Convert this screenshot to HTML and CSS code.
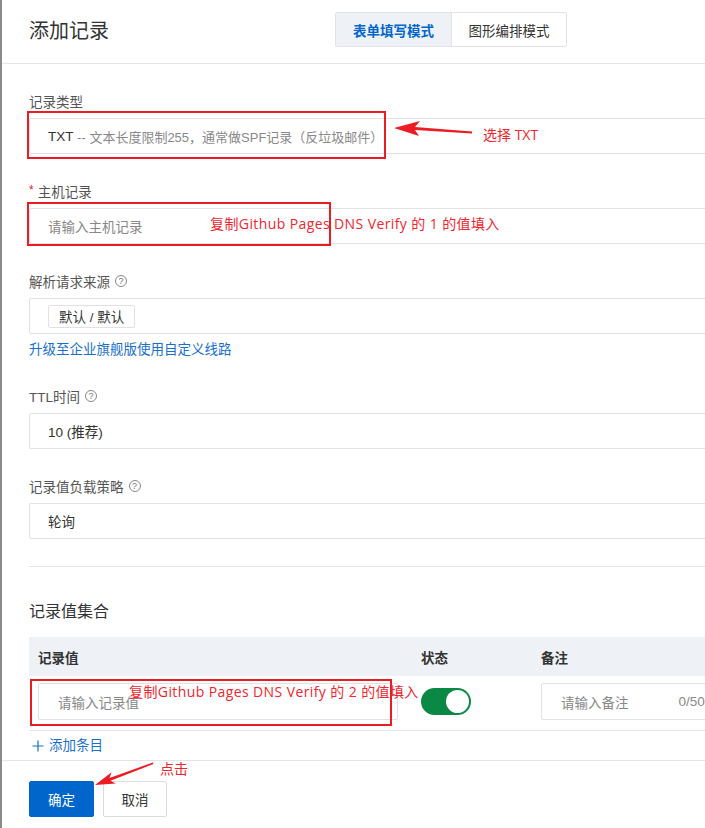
FILE: index.html
```html
<!doctype html>
<html lang="zh-CN">
<head>
	<meta charset="UTF-8">
	<title>添加记录</title>
	<link rel="stylesheet" href="styles.css">
</head>
<body>
	<div class="drawer">
		<div class="drawer-header">
			<h2 class="drawer-title">添加记录</h2>
			<div class="mode-switch">
				<span class="mode-item mode-active">表单填写模式</span>
				<span class="mode-item">图形编排模式</span>
			</div>
		</div>

		<div class="drawer-body">
			<div class="form-item">
				<div class="form-label">记录类型</div>
				<div class="form-input"><span class="val">TXT</span><span class="muted">&nbsp;-- 文本长度限制255，通常做SPF记录（反垃圾邮件）</span></div>
			</div>
			<div class="form-item">
				<div class="form-label"><span class="req">*</span>主机记录</div>
				<div class="form-input"><span class="placeholder">请输入主机记录</span></div>
			</div>
			<div class="form-item">
				<div class="form-label">解析请求来源 <span class="help">?</span></div>
				<div class="form-input"><span class="tag">默认 / 默认</span></div>
				<a class="form-link" href="#">升级至企业旗舰版使用自定义线路</a>
			</div>
			<div class="form-item">
				<div class="form-label">TTL时间 <span class="help">?</span></div>
				<div class="form-input"><span class="val">10 (推荐)</span></div>
			</div>
			<div class="form-item">
				<div class="form-label">记录值负载策略 <span class="help">?</span></div>
				<div class="form-input"><span class="val">轮询</span></div>
			</div>

			<div class="divider"></div>

			<h3 class="section-title">记录值集合</h3>
			<div class="value-table">
				<div class="vt-row vt-head">
					<div class="vt-cell">记录值</div>
					<div class="vt-cell">状态</div>
					<div class="vt-cell">备注</div>
				</div>
				<div class="vt-row vt-body">
					<div class="vt-cell"><div class="cell-input value-input"><span class="placeholder">请输入记录值</span></div></div>
					<div class="vt-cell"><span class="switch"><span class="switch-knob"></span></span></div>
					<div class="vt-cell"><div class="cell-input remark-input"><span class="placeholder">请输入备注</span><span class="count">0/50</span></div></div>
				</div>
			</div>
			<a class="add-item" href="#">
				<svg width="12" height="12" viewBox="0 0 12 12"><path d="M6 0.5V11.5M0.5 6H11.5" stroke="#1a6fcc" stroke-width="1.2" fill="none"/></svg>
				添加条目
			</a>
		</div>

		<div class="drawer-footer">
			<button class="btn btn-primary">确定</button>
			<button class="btn">取消</button>
		</div>

		<!-- tutorial marks drawn on top of the screenshot -->
		<svg class="marks" width="705" height="828" viewBox="0 0 705 828">
			<rect x="28" y="112" width="357" height="46" fill="none" stroke="#ec1c24" stroke-width="2"/>
			<rect x="28" y="203" width="302" height="42" fill="none" stroke="#ec1c24" stroke-width="2"/>
			<rect x="31" y="680" width="360" height="45" fill="none" stroke="#ec1c24" stroke-width="2"/>
			<polygon fill="#ec1c24" points="394,128 420,121 415,127 472,131.5 472,133.5 415,130 419,136"/>
			<polygon fill="#ec1c24" points="95,785 111.6,772.3 109.5,777.9 152.8,762.5 153.4,764 110.5,780.7 115.8,783.5"/>
		</svg>
		<span class="note note-type">选择 TXT</span>
		<span class="note note-host">复制Github Pages DNS Verify 的 1 的值填入</span>
		<span class="note note-value">复制Github Pages DNS Verify 的 2 的值填入</span>
		<span class="note note-click">点击</span>
	</div>
</body>
</html>
```

FILE: styles.css
```css
*{
	margin: 0;
	padding: 0;
	box-sizing: border-box;
}
body{
	background: #fff;
	overflow: hidden;
	font-family: "Liberation Sans", "Noto Sans CJK SC", sans-serif;
	font-size: 13.5px;
	color: #333;
}
.drawer{
	position: relative;
	width: 900px;
	height: 828px;
	border-left: 2px solid #8a8a8a;
}
.drawer-header{
	display: flex;
	align-items: flex-start;
	height: 64px;
	padding: 12px 0 0 27px;
	border-bottom: 1px solid #e5e5e5;
}
.drawer-title{
	margin-top: 7px;
	font-size: 20px;
	line-height: 24px;
	font-weight: normal;
	color: #333;
}
.mode-switch{
	display: flex;
	margin-left: 226px;
	height: 35px;
	border: 1px solid #e3e3e3;
	border-radius: 2px;
}
.mode-item{
	display: flex;
	align-items: center;
	justify-content: center;
	width: 115px;
	color: #333;
}
.mode-item + .mode-item{
	border-left: 1px solid #e3e3e3;
}
.mode-active{
	background: #eef1f6;
	color: #0066cc;
	font-weight: bold;
}

.drawer-body{
	padding: 27px 0 0 27px;
	width: 800px;
}
.form-item{
	margin-bottom: 27px;
}
.form-label{
	display: flex;
	align-items: center;
	height: 20px;
	margin-bottom: 7px;
	color: #555;
}
.req{
	color: #e0202a;
	font-size: 12px;
	margin-right: 4px;
	position: relative;
	top: -1px;
}
.help{
	display: inline-flex;
	align-items: center;
	justify-content: center;
	width: 12px;
	height: 12px;
	margin-left: 5px;
	border: 1px solid #888;
	border-radius: 50%;
	font-size: 9px;
	color: #777;
}
.form-input{
	display: flex;
	align-items: center;
	height: 36px;
	padding-left: 18px;
	border: 1px solid #e2e2e2;
	border-radius: 2px;
}
.val{
	color: #333;
}
.muted{
	color: #888;
	font-size: 13px;
}
.placeholder{
	color: #888;
}
.tag{
	display: inline-flex;
	align-items: center;
	height: 23px;
	padding: 0 10px;
	border: 1px solid #e2e2e2;
	border-radius: 2px;
	color: #333;
}
.form-link{
	display: block;
	margin-top: 7px;
	line-height: 18px;
	color: #1a6fcc;
	text-decoration: none;
}

.divider{
	height: 1px;
	background: #e5e5e5;
	margin-bottom: 33px;
}
.section-title{
	font-size: 16px;
	line-height: 24px;
	font-weight: normal;
	color: #333;
	margin-bottom: 13px;
}
.vt-row{
	display: grid;
	grid-template-columns: 383px 120px 1fr;
}
.vt-head{
	height: 39px;
	background: #eef1f6;
	align-items: center;
	font-weight: bold;
	color: #333;
}
.vt-cell{
	padding-left: 9px;
	display: flex;
	align-items: center;
}
.vt-body{
	padding: 7px 0 10px;
	border-bottom: 1px solid #e5e5e5;
}
.cell-input{
	display: flex;
	align-items: center;
	height: 37px;
	padding-left: 19px;
	border: 1px solid #e2e2e2;
	border-radius: 2px;
}
.value-input{
	width: 360px;
}
.remark-input{
	width: 300px;
}
.count{
	margin-left: 50px;
	color: #888;
}
.switch{
	display: flex;
	justify-content: flex-end;
	align-items: center;
	width: 50px;
	height: 27px;
	padding: 2px;
	border-radius: 14px;
	background: #0a8944;
}
.switch-knob{
	width: 23px;
	height: 23px;
	border-radius: 50%;
	background: #fff;
}
.add-item{
	display: inline-flex;
	align-items: center;
	gap: 5px;
	margin: 6px 0 0 3px;
	line-height: 18px;
	color: #1a6fcc;
	text-decoration: none;
}

.drawer-footer{
	display: flex;
	gap: 9px;
	margin-top: 5px;
	padding: 20px 0 0 27px;
	border-top: 1px solid #e5e5e5;
}
.btn{
	height: 36px;
	width: 64px;
	border: 1px solid #dcdcdc;
	border-radius: 2px;
	background: #fff;
	font-family: inherit;
	font-size: 13.5px;
	color: #333;
}
.btn-primary{
	width: 65px;
	background: #0066cc;
	border-color: #0066cc;
	color: #fff;
}

.marks{
	position: absolute;
	top: 0;
	left: -2px;
	pointer-events: none;
}
.note{
	position: absolute;
	font-family: "Open Sans", "Noto Sans CJK SC", sans-serif;
	font-size: 14px;
	line-height: 18px;
	color: #f0262e;
	white-space: nowrap;
}
.note-type{
	left: 481px;
	top: 126px;
}
.note-host,
.note-value{
	letter-spacing: 0.4px;
}
.note-host{
	left: 208px;
	top: 215px;
}
.note-value{
	left: 127px;
	top: 683px;
}
.note-click{
	left: 158px;
	top: 760px;
}
```
